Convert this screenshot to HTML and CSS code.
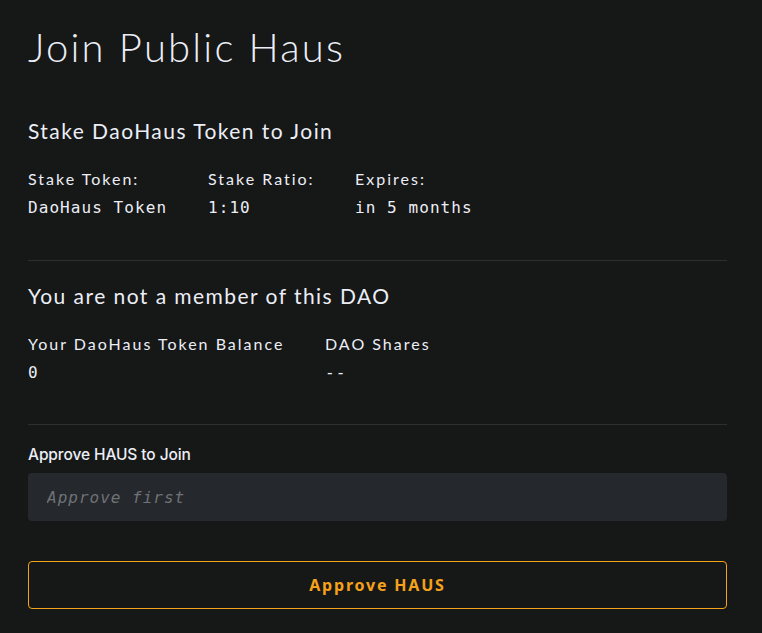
FILE: index.html
```html
<!DOCTYPE html>
<html>
<head>
<meta charset="utf-8">
<link rel="stylesheet" href="styles.css">
</head>
<body>
<main class="page">
  <h1 class="title">Join Public Haus</h1>
  <section class="section section-first">
    <h2 class="heading">Stake DaoHaus Token to Join</h2>
    <div class="stats stats-3">
      <div class="stat"><div class="label">Stake Token:</div><div class="value">DaoHaus Token</div></div>
      <div class="stat"><div class="label">Stake Ratio:</div><div class="value">1:10</div></div>
      <div class="stat"><div class="label">Expires:</div><div class="value">in 5 months</div></div>
    </div>
  </section>
  <hr class="divider">
  <section class="section">
    <h2 class="heading">You are not a member of this DAO</h2>
    <div class="stats stats-2">
      <div class="stat"><div class="label">Your DaoHaus Token Balance</div><div class="value">0</div></div>
      <div class="stat"><div class="label">DAO Shares</div><div class="value">--</div></div>
    </div>
  </section>
  <hr class="divider">
  <form class="form">
    <label class="field-label" for="amt">Approve HAUS to Join</label>
    <input class="input" id="amt" type="text" placeholder="Approve first" disabled>
    <button class="btn" type="button">Approve HAUS</button>
  </form>
</main>
</body>
</html>
```

FILE: styles.css
```css
html, body {
  margin: 0;
  padding: 0;
  background: #161717;
  color: #eceef6;
}
.page {
  padding: 21px 35px 0 28px;
  font-family: Lato, "Noto Sans", sans-serif;
}
.title {
  margin: 0;
  font-size: 40px;
  font-weight: 300;
  line-height: 52px;
  letter-spacing: 2.2px;
}
.section {
  display: flex;
  flex-direction: column;
}
.heading {
  margin: 22px 0 0;
  font-size: 21px;
  font-weight: 400;
  letter-spacing: 1.45px;
  line-height: 26px;
}
.section-first .heading { margin-top: 45px; }
.stats {
  display: grid;
  margin-top: 25px;
}
.stats-3 { grid-template-columns: 180px 147px 1fr; }
.stats-2 { grid-template-columns: 297px 1fr; }
.label {
  font-size: 16px;
  letter-spacing: 2px;
  line-height: 20px;
  white-space: nowrap;
}
.value {
  margin-top: 9.4px;
  font-family: "DejaVu Sans Mono", monospace;
  font-size: 16px;
  letter-spacing: 1.07px;
  line-height: 20px;
  white-space: nowrap;
}
.divider {
  margin: 41.2px 0 0;
  border: 0;
  border-top: 1px solid #2c2e30;
}
.form {
  display: flex;
  flex-direction: column;
}
.field-label {
  margin-top: 19.7px;
  font-family: Inter, sans-serif;
  font-size: 15.5px;
  font-weight: 500;
  letter-spacing: -0.1px;
  line-height: 20px;
}
.input {
  margin-top: 8.3px;
  height: 48px;
  box-sizing: border-box;
  border: 0;
  border-radius: 4px;
  background: #25282c;
  padding: 0 19px;
  font-family: "DejaVu Sans Mono", monospace;
  font-style: italic;
  font-size: 16px;
  letter-spacing: 1px;
  color: #6f7276;
}
.input::placeholder { color: #6f7276; }
.btn {
  margin-top: 40px;
  height: 48px;
  background: transparent;
  border: 1px solid #f5a21b;
  border-radius: 4px;
  color: #f5a21b;
  font-family: "Noto Sans", sans-serif;
  font-size: 16px;
  font-weight: 700;
  letter-spacing: 1.8px;
}
```
